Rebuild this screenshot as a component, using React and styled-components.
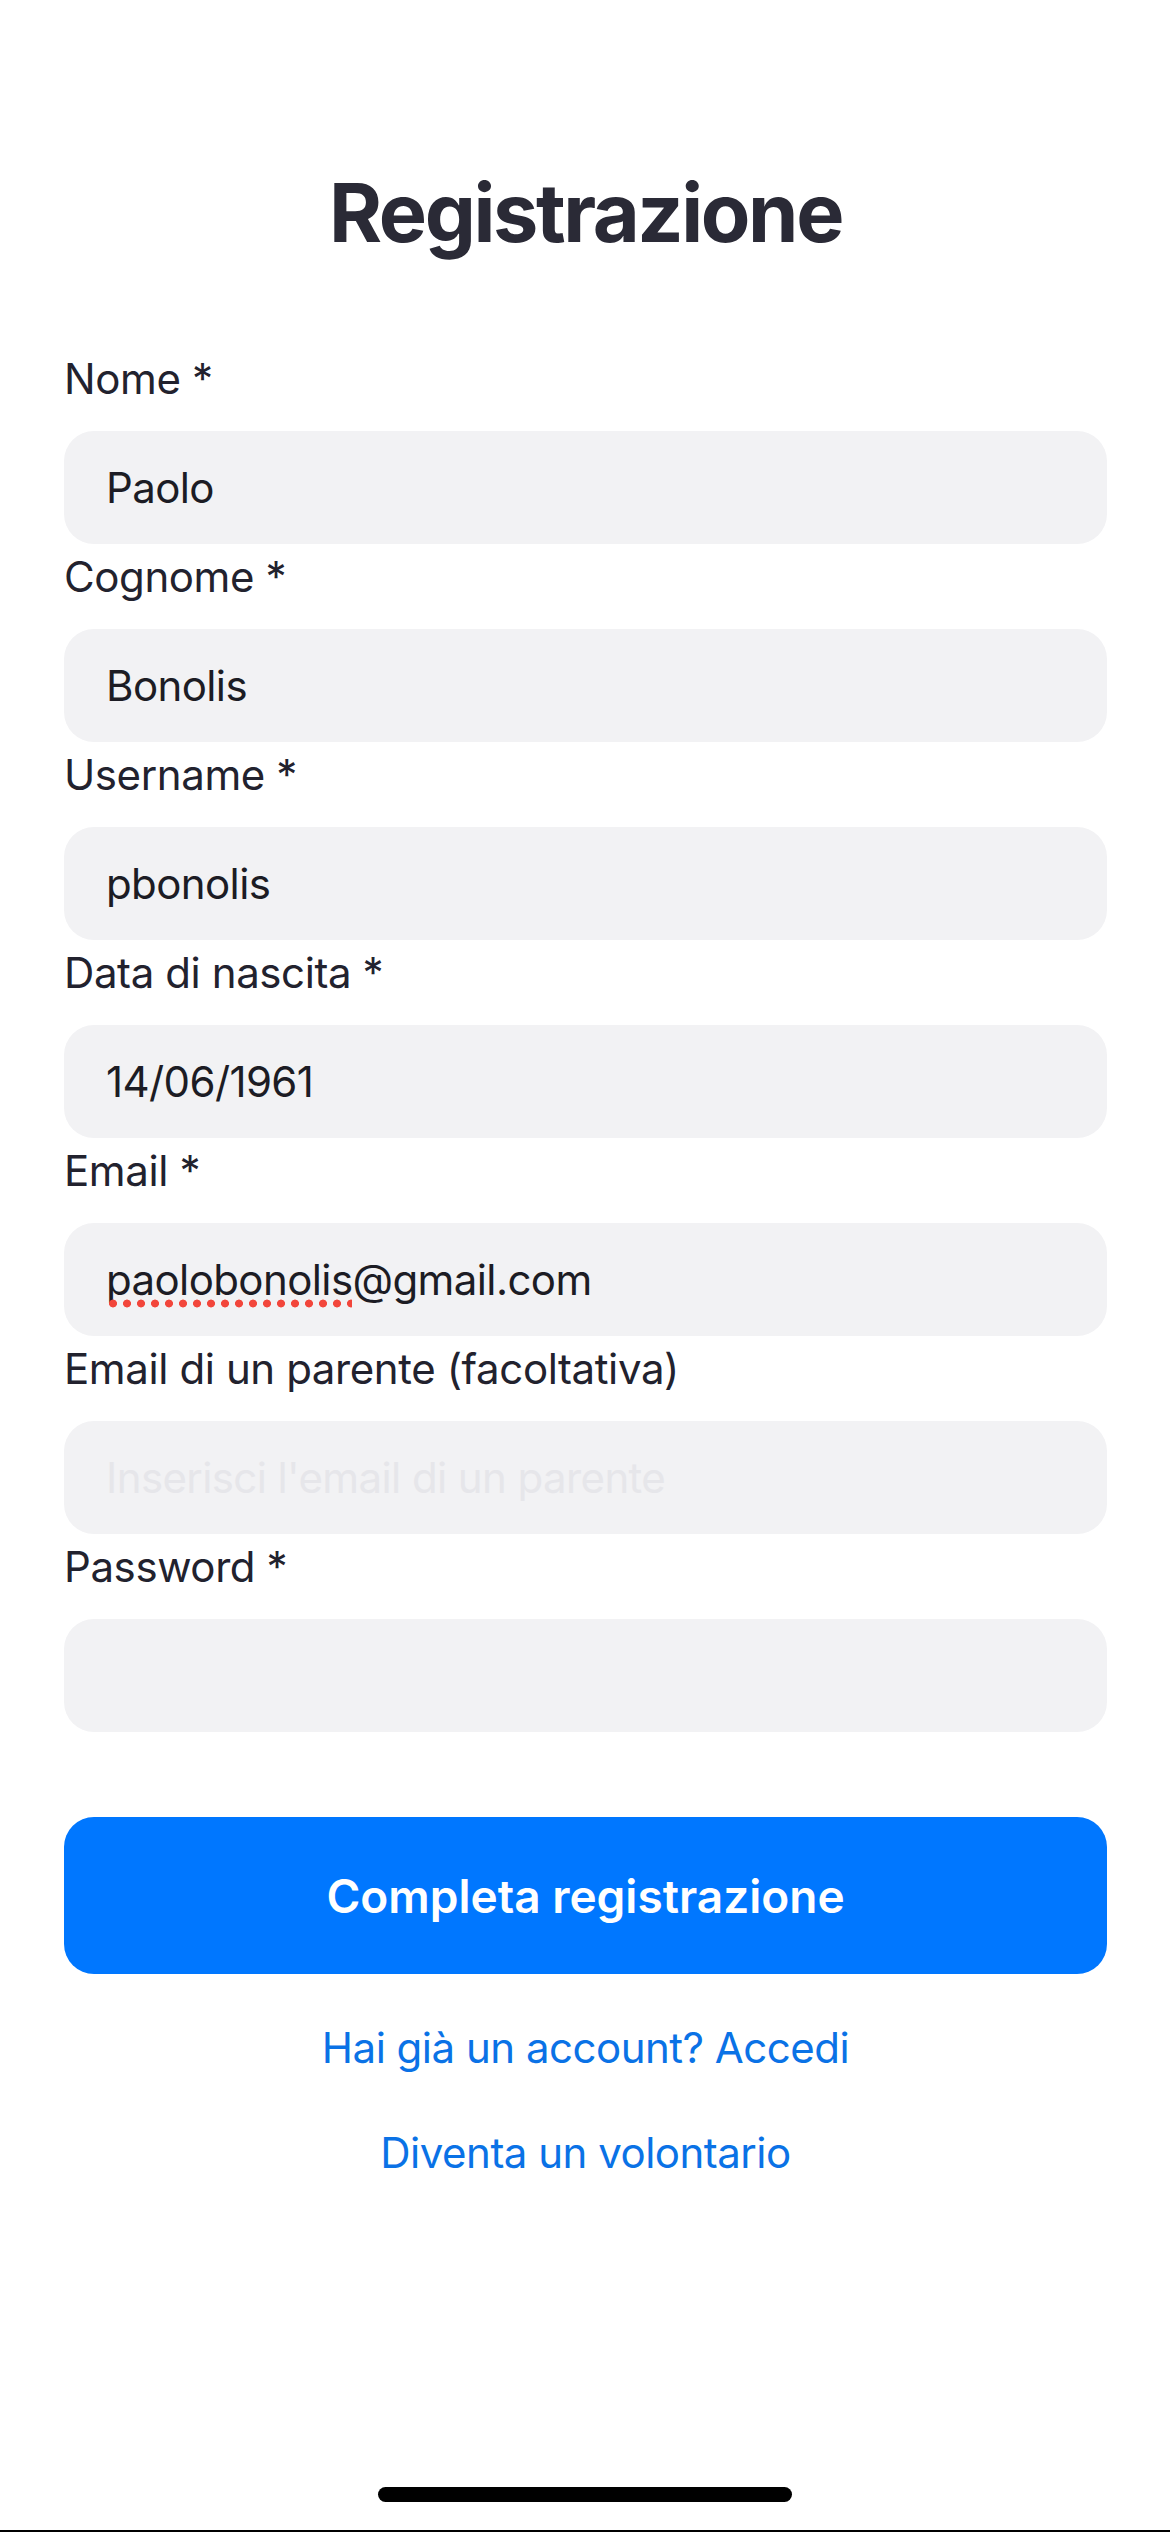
import React from "react";
import styled, { createGlobalStyle } from "styled-components";

const Global = createGlobalStyle`
  html, body { margin: 0; padding: 0; background: #ffffff; }
  body { font-family: Inter, "Noto Sans", "Liberation Sans", sans-serif; -webkit-font-smoothing: antialiased; }
  * { box-sizing: border-box; }
`;

const Screen = styled.div`
  position: relative;
  width: 1170px;
  height: 2532px;
  background: #ffffff;
  border-bottom: 2px solid #000;
  overflow: hidden;
`;

const Content = styled.main`
  display: flex;
  flex-direction: column;
  padding: 163px 63px 0 64px;
`;

const Title = styled.h1`
  margin: 0 0 83px;
  font-size: 81px;
  line-height: 100px;
  font-weight: 700;
  color: #2a2a36;
  text-align: center;
  letter-spacing: -2.4px;
`;

const Form = styled.form`
  display: flex;
  flex-direction: column;
`;

const Field = styled.div`
  display: flex;
  flex-direction: column;
`;

const Label = styled.label`
  margin: 7px 0 26px;
  font-size: 42px;
  line-height: 52px;
  letter-spacing: -0.4px;
  color: #22222e;
`;

const InputBox = styled.div`
  display: flex;
  align-items: center;
  height: 113px;
  padding: 0 42px;
  border-radius: 30px;
  background: #f2f2f4;
  font-size: 42px;
  line-height: 52px;
  letter-spacing: -0.6px;
  color: ${(p) => (p.$placeholder ? "#e6e6ea" : "#1c1c24")};
`;

const Misspelled = styled.span`
  position: relative;
  &::after {
    content: "";
    position: absolute;
    left: 0;
    right: 0;
    bottom: -3px;
    height: 9px;
    background-image: radial-gradient(circle, #f2463b 3.6px, transparent 4.3px);
    background-size: 14px 9px;
    background-repeat: repeat-x;
  }
`;

const Submit = styled.button`
  margin-top: 85px;
  height: 157px;
  border: none;
  border-radius: 30px;
  background: #0077ff;
  color: #ffffff;
  font-family: inherit;
  font-size: 46px;
  font-weight: 600;
  letter-spacing: 0;
`;

const Links = styled.nav`
  display: flex;
  flex-direction: column;
  align-items: center;
  gap: 53px;
  margin-top: 48px;
`;

const LinkText = styled.a`
  font-size: 42px;
  line-height: 52px;
  letter-spacing: -0.5px;
  color: #0a72e6;
  text-decoration: none;
`;

const HomeIndicator = styled.div`
  position: absolute;
  left: 378px;
  bottom: 28px;
  width: 414px;
  height: 15px;
  border-radius: 8px;
  background: #000;
`;

const fields = [
  { label: "Nome *", value: "Paolo" },
  { label: "Cognome *", value: "Bonolis" },
  { label: "Username *", value: "pbonolis" },
  { label: "Data di nascita *", value: "14/06/1961" },
  { label: "Email *", value: "email" },
  { label: "Email di un parente (facoltativa)", placeholder: "Inserisci l'email di un parente" },
  { label: "Password *", value: "" },
];

export default function App() {
  return (
    <>
      <Global />
      <Screen>
        <Content>
          <Title>Registrazione</Title>
          <Form onSubmit={(e) => e.preventDefault()}>
            {fields.map((f) => (
              <Field key={f.label}>
                <Label>{f.label}</Label>
                <InputBox $placeholder={!!f.placeholder}>
                  {f.placeholder
                    ? f.placeholder
                    : f.value === "email"
                    ? (
                      <span>
                        <Misspelled>paolobonolis</Misspelled>@gmail.com
                      </span>
                    )
                    : f.value}
                </InputBox>
              </Field>
            ))}
            <Submit type="submit">Completa registrazione</Submit>
          </Form>
          <Links>
            <LinkText href="#">Hai già un account? Accedi</LinkText>
            <LinkText href="#">Diventa un volontario</LinkText>
          </Links>
        </Content>
        <HomeIndicator />
      </Screen>
    </>
  );
}
